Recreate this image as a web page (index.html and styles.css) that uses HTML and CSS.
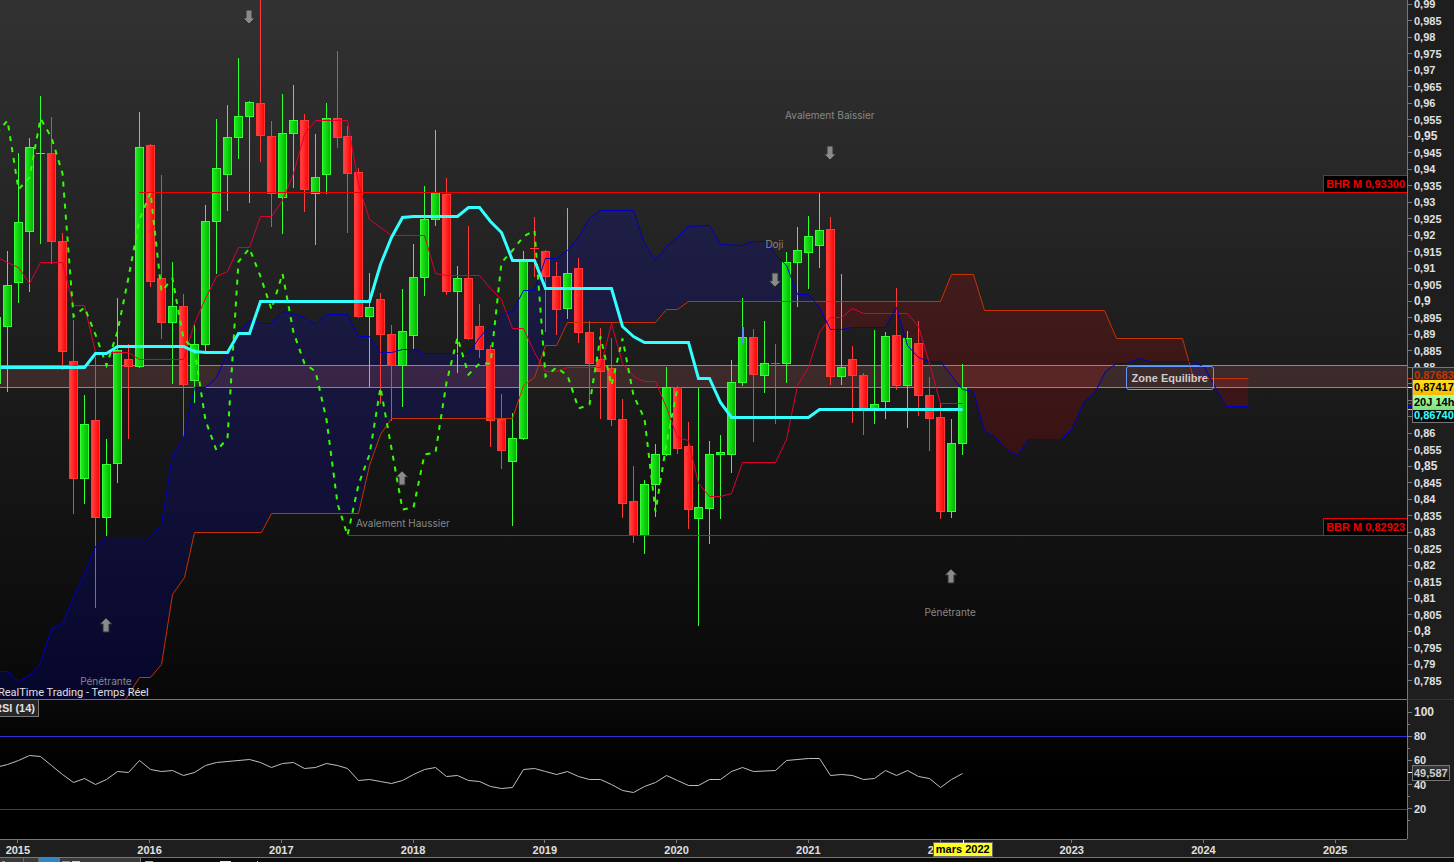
FILE: index.html
```html
<!DOCTYPE html>
<html lang="fr">
  <head>
    <meta charset="UTF-8" />
    <meta name="viewport" content="width=device-width, initial-scale=1.0" />
    <title>Graphique mensuel</title>
    <link rel="stylesheet" href="styles.css" />
  </head>
  <body>
    <main class="chart">
      <section class="price-plot">
        <svg class="plot" viewBox="0 0 1407 699" preserveAspectRatio="none">
          <defs>
            <linearGradient id="up-fill">
              <stop offset="0" stop-color="#22ee22" />
              <stop offset="1" stop-color="#00b400" />
            </linearGradient>
            <linearGradient id="down-fill">
              <stop offset="0" stop-color="#ff4848" />
              <stop offset="1" stop-color="#ff0000" />
            </linearGradient>
            <path id="arrow-down" d="M-3 0H3V8H6L0 14L-6 8H-3Z" />
            <path id="arrow-up" d="M-3 14H3V6H6L0 0L-6 6H-3Z" />
          </defs>

          <!-- cloud -->
          <polygon class="cloud-blue" points="0,671 7,671 18,681 29,675 40,663 51,628 62,623 73,597 84,573 95,546 106,537 150,537 161,524 172,455 183,438 194,387 205,387 216,377 227,352 238,333 249,320 260,323 271,323 282,311 304,317 315,324 326,314 347,314 358,336 369,336 380,352 391,352 402,349 413,349 424,353 468,353 479,337 490,325 501,314 512,311 523,290 534,290 545,258 556,258 567,250 578,237 589,218 600,210 633,210 644,243 655,260 666,246 677,237 688,226 709,225 720,244 742,245 753,241 764,241 775,254 786,265 797,294 808,294 814,301 688,301 677,309 666,309 655,322 567,322 556,345 545,345 534,377 523,385 512,418 391,418 380,434 369,465 358,513 271,513 261,532 194,532 184,577 172,594 161,664 150,677 139,677 125,699 0,699" />
          <polygon class="cloud-red" points="814,301 819,307 830,329 841,329 852,327 885,327 896,307 907,345 918,357 929,361 940,361 951,375 962,389 973,391 984,430 995,437 1006,449 1017,455 1028,439 1061,439 1072,428 1083,402 1094,393 1105,371 1116,363 1127,363 1138,358 1149,361 1188,361 1182,338 1116,338 1104,310 984,310 973,274 951,274 940,301" />
          <polygon class="cloud-blue" points="1188,361 1193,361 1204,367 1210,378 1193,378" />
          <polygon class="cloud-red" points="1210,378 1248,378 1248,406 1226,406 1215,387" />

          <!-- zone equilibre -->
          <rect class="zone" x="0" y="365" width="1407" height="23" />
          <path class="zone-line" d="M0 365.5H1407M0 387.5H1407" />

          <g id="candles"></g>

          <g class="lines" transform="translate(0.5 0.5)">
            <polyline class="tenkan" points="-1,258 7,262 18,267 29,283 40,262 62,262 73,305 84,305 95,352 128,352 139,359 183,359 194,323 205,298 216,276 227,271 238,247 249,247 260,216 271,216 282,200 293,173 304,134 315,120 347,120 358,184 369,219 391,235 424,235 435,273 446,275 479,275 490,288 501,299 512,328 523,328 534,352 545,371 556,371 567,367 600,367 611,323 622,363 633,376 644,381 655,381 666,407 677,437 688,440 698,483 709,496 720,496 731,493 742,462 775,462 786,439 797,385 808,367 819,332 830,317 841,317 852,308 863,313 907,313 918,326 929,363 940,403 962,403" />
            <polyline class="span-b" points="125,699 139,677 150,677 161,664 172,594 184,577 194,532 261,532 271,513 358,513 369,465 380,434 391,418 512,418 523,385 534,377 545,345 556,345 567,322 655,322 666,309 677,309 688,301 940,301 951,274 973,274 984,310 1104,310 1116,338 1182,338 1193,378 1248,378" />
            <polyline class="span-a" points="-1,671 7,671 18,681 29,675 40,663 51,628 62,623 73,597 84,573 95,546 106,537 150,537 161,524 172,455 183,438 194,387 205,387 216,377 227,352 238,333 249,320 260,323 271,323 282,311 304,317 315,324 326,314 347,314 358,336 369,336 380,352 391,352 402,349 413,349 424,353 468,353 479,337 490,325 501,314 512,311 523,290 534,290 545,258 556,258 567,250 578,237 589,218 600,210 633,210 644,243 655,260 666,246 677,237 688,226 709,225 720,244 742,245 753,241 764,241 775,254 786,265 797,294 808,294 819,307 830,329 841,329 852,327 885,327 896,307 907,345 918,357 929,361 940,361 951,375 962,389 973,391 984,430 995,437 1006,449 1017,455 1028,439 1061,439 1072,428 1083,402 1094,393 1105,371 1116,363 1127,363 1138,358 1149,361 1193,361 1204,367 1215,387 1226,406 1248,406" />
            <polyline class="chikou" id="chikou" />
            <polyline class="kijun" points="-1,367 84,367 95,353 106,353 117,346 183,346 194,351 205,352 227,352 238,333 249,333 260,301 369,301 380,264 391,237 402,217 413,216 457,216 468,207 479,207 490,221 501,232 512,260 534,260 545,288 611,288 622,326 633,336 644,342 688,342 698,378 709,378 720,402 731,417 808,417 819,409 962,409" />
            <path class="level" d="M139 192H1407M347 535H1407" />
          </g>
          <rect class="mark" x="742" y="327" width="2" height="16" />

          <g class="arrows">
            <use href="#arrow-down" x="249" y="10" />
            <use href="#arrow-down" x="830" y="146" />
            <use href="#arrow-down" x="775" y="273" />
            <use href="#arrow-up" x="106" y="618" />
            <use href="#arrow-up" x="402" y="471" />
            <use href="#arrow-up" x="951" y="569" />
          </g>
        </svg>
        <span class="note note-baissier">Avalement Baissier</span>
        <span class="note note-doji">Doji</span>
        <span class="note note-haussier">Avalement Haussier</span>
        <span class="note note-penetrante">Pénétrante</span>
        <span class="note note-penetrante-2022">Pénétrante</span>
        <span class="zone-label">Zone Equilibre</span>
        <span class="level-label level-high">BHR M 0,93300</span>
        <span class="level-label level-low">BBR M 0,82923</span>
        <span class="feed">RealTime Trading - Temps Réel</span>
      </section>

      <aside class="price-axis">
        <ul class="scale" id="price-scale"></ul>
        <svg class="axis-marks" viewBox="0 0 4 699" preserveAspectRatio="none">
          <rect x="0" y="378" width="4" height="1" fill="#d43a00" />
          <rect x="0" y="387" width="4" height="1" fill="#ffffff" />
          <rect x="0" y="403" width="4" height="1" fill="#e00030" />
          <rect x="0" y="406" width="4" height="2" fill="#0000e0" />
          <rect x="0" y="409" width="4" height="1" fill="#33ffff" />
        </svg>
        <div class="quotes">
          <span class="quote quote-span">0,87683</span>
          <span class="quote quote-last">0,87417</span>
          <span class="quote quote-time">20J 14h</span>
          <span class="quote quote-kijun">0,86740</span>
        </div>
      </aside>

      <section class="rsi-plot">
        <svg class="plot" viewBox="0 700 1407 139" preserveAspectRatio="none">
          <path class="rsi-level" d="M0 736.5H1407M0 809.5H1407" />
          <polyline class="rsi-line" transform="translate(0.5 0.5)" points="-1,766 7,764 18,760 29,755 40,756 51,765 62,774 73,782 84,778 95,784 106,779 117,771 128,772 139,760 150,769 161,771 172,770 183,775 194,772 205,765 216,762 249,759 260,762 271,767 282,763 293,762 304,768 315,767 326,763 337,765 347,768 358,780 369,779 380,781 391,783 402,780 413,774 424,769 435,767 446,776 457,775 468,780 479,781 490,786 501,788 512,787 523,769 534,768 545,771 556,774 567,771 578,776 589,779 600,779 611,784 622,790 633,792 644,786 655,782 666,775 677,780 688,785 698,785 709,779 720,779 731,771 742,767 753,771 775,770 786,760 808,758 819,758 830,775 841,774 852,775 863,779 874,778 885,770 896,775 907,770 918,776 929,778 940,787 951,779 962,773" />
        </svg>
        <span class="rsi-title">RSI (14)</span>
      </section>

      <aside class="rsi-axis">
        <ul class="scale">
          <li class="round">100</li>
          <li class="minor"></li>
          <li>80</li>
          <li class="minor"></li>
          <li>60</li>
          <li class="current"></li>
          <li>40</li>
          <li class="minor"></li>
          <li>20</li>
          <li class="minor"></li>
        </ul>
        <span class="rsi-value">49,587</span>
      </aside>

      <footer class="time-axis">
        <ul class="years">
          <li>2015</li>
          <li>2016</li>
          <li>2017</li>
          <li>2018</li>
          <li>2019</li>
          <li>2020</li>
          <li>2021</li>
          <li>2022</li>
          <li>2023</li>
          <li>2024</li>
          <li>2025</li>
        </ul>
        <span class="month">mars 2022</span>
      </footer>
      <div class="axis-corner"></div>
    </main>

    <div class="taskbar">
      <svg width="260" height="4" viewBox="0 0 260 4">
        <rect width="140" height="4" fill="#3a3a3a" />
        <rect x="2" y="3" width="3" height="1" fill="#5fbf4f" />
        <rect x="23" width="1" height="4" fill="#666" />
        <rect x="38" width="1" height="4" fill="#666" />
        <rect x="39" width="21" height="4" fill="#2f86c0" />
        <rect x="62" y="3" width="8" height="1" fill="#5d9fce" />
        <rect x="72" y="3" width="8" height="1" fill="#ccc" />
        <rect x="140" width="1" height="4" fill="#777" />
        <rect x="145" y="3" width="8" height="1" fill="#aaa" />
        <rect x="220" y="3" width="11" height="1" fill="#e8e8e8" />
        <rect x="257" y="3" width="1" height="1" fill="#9fe09f" />
      </svg>
    </div>

    <script src="chart.js"></script>
  </body>
</html>
```
FILE: styles.css
```css
* {
  box-sizing: border-box;
}
body {
  margin: 0;
  height: 100vh;
  display: flex;
  flex-direction: column;
  overflow: hidden;
  background-color: #000;
  color: #e0e0e0;
  font-family: "Liberation Sans", Arial, sans-serif;
  font-size: 11px;
}
ul {
  margin: 0;
  padding: 0;
  list-style: none;
}
.chart {
  flex: 1;
  min-height: 0;
  display: grid;
  grid-template-columns: 1fr 47px;
  grid-template-rows: 1fr 140px 19px;
}
.price-plot,
.rsi-plot {
  position: relative;
  min-width: 0;
  min-height: 0;
  overflow: hidden;
}
.price-plot {
  background: linear-gradient(#323232, #080808);
}
.rsi-plot {
  border-top: 1px solid #777;
  background: linear-gradient(#090909, #000 50%);
}
.plot {
  display: block;
  width: 100%;
  height: 100%;
}

/* price drawing */
.cloud-blue {
  fill: rgba(0, 0, 255, 0.15);
}
.cloud-red {
  fill: rgba(255, 0, 0, 0.15);
}
.zone {
  fill: rgba(255, 130, 130, 0.15);
}
.zone-line {
  stroke: #e06464;
}
.lines {
  fill: none;
}
.tenkan {
  stroke: #e00030;
}
.span-a {
  stroke: #0000c0;
}
.span-b {
  stroke: #c83200;
}
.chikou {
  stroke: #33ff00;
  stroke-width: 2;
  stroke-dasharray: 5 6;
}
.kijun {
  stroke: #33ffff;
  stroke-width: 3;
}
.level {
  stroke: #f00000;
}
.mark {
  fill: #5a8cff;
}
.candle {
  shape-rendering: crispEdges;
}
.candle-up {
  fill: url(#up-fill);
  stroke: #33ff33;
}
.candle-down {
  fill: url(#down-fill);
  stroke: #ff3838;
}
.arrows {
  fill: #8a8a8a;
  stroke: #303030;
}

/* labels on the plot */
.note {
  position: absolute;
  line-height: 12px;
  font-family: Inter, "Liberation Sans", sans-serif;
  font-size: 10px;
  color: #888;
  white-space: nowrap;
}
.note-baissier {
  left: 55.8%;
  top: 15.6%;
}
.note-doji {
  left: 54.4%;
  top: 34.1%;
}
.note-haussier {
  left: 25.3%;
  top: 74%;
}
.note-penetrante {
  left: 5.7%;
  top: 96.6%;
}
.note-penetrante-2022 {
  left: 65.7%;
  top: 86.7%;
}
.zone-label {
  position: absolute;
  left: 80%;
  top: 52.3%;
  padding: 0 5px;
  border: 1px solid #6496ff;
  border-radius: 3px;
  line-height: 22px;
  font-weight: bold;
  color: #ccc;
}
.level-label {
  position: absolute;
  right: 0;
  padding: 0 2px;
  border: 1px solid #f00000;
  border-right: none;
  background-color: #000;
  line-height: 16px;
  font-weight: bold;
  color: #f00000;
}
.level-high {
  top: 25%;
}
.level-low {
  top: 74.1%;
}
.feed {
  position: absolute;
  left: -2px;
  bottom: 0;
  line-height: 12px;
  font-family: Roboto, "Liberation Sans", sans-serif;
}
.rsi-title {
  position: absolute;
  left: 0;
  top: 0;
  width: 39px;
  padding-right: 3px;
  display: flex;
  justify-content: flex-end;
  overflow: hidden;
  border-right: 1px solid #777;
  border-bottom: 1px solid #777;
  background-color: #262626;
  line-height: 16px;
  font-weight: bold;
  white-space: nowrap;
}
.rsi-level {
  stroke: #3030d8;
}
.rsi-line {
  fill: none;
  stroke: #c0c0c0;
}

/* axes */
.price-axis,
.rsi-axis {
  position: relative;
  border-left: 1px solid #777;
  background-color: #1e1e1e;
}
.rsi-axis {
  border-top: 1px solid #333;
}
.scale {
  height: 100%;
  display: flex;
  flex-direction: column;
  justify-content: space-between;
  padding-bottom: 14px;
}
.rsi-axis .scale {
  padding-top: 8px;
}
.scale li {
  display: flex;
  align-items: center;
  gap: 2px;
  height: 8px;
  font-weight: bold;
}
.scale li::before {
  content: "";
  width: 4px;
  height: 1px;
  background-color: #777;
}
.scale .round {
  font-size: 12px;
}
.scale .minor::before {
  width: 2px;
}
.scale .current::before {
  background-color: #fff;
}
.axis-marks {
  position: absolute;
  left: 0;
  top: 0;
  width: 4px;
  height: 100%;
}
.quotes {
  position: absolute;
  left: 4px;
  right: 0;
  top: 52.5%;
  display: flex;
  flex-direction: column;
  border: 1px solid #777;
  border-right: none;
  font-weight: bold;
  white-space: nowrap;
  overflow: hidden;
}
.quote {
  height: 12px;
  padding-left: 1px;
  line-height: 14px;
}
.quote-span {
  background-color: #2c2c2c;
  color: #c83200;
}
.quote-last {
  height: 15px;
  background: linear-gradient(#ffe020, #f8b800);
  color: #000;
}
.quote-time {
  height: 15px;
  background: linear-gradient(#a8ffa0, #80dc80);
  line-height: 15px;
  color: #000;
}
.quote-kijun {
  background-color: #0c0c0c;
  line-height: 11px;
  color: #33ffff;
}
.rsi-value {
  position: absolute;
  left: 4px;
  top: 65px;
  padding: 0 1px;
  border: 1px solid #777;
  background: linear-gradient(#3a3a3a, #0c0c0c);
  line-height: 14px;
  font-weight: bold;
  color: #ccc;
}
.time-axis,
.axis-corner {
  border-bottom: 1px solid #777;
  background-color: #1e1e1e;
}
.time-axis {
  position: relative;
  border-top: 1px solid #777;
}
.years {
  display: flex;
  margin-left: -48px;
  margin-right: 6px;
}
.years li {
  flex: 1;
  display: flex;
  flex-direction: column;
  align-items: center;
  line-height: 14px;
  font-weight: bold;
}
.years li::before {
  content: "";
  width: 1px;
  height: 3px;
  background-color: #777;
}
.month {
  position: absolute;
  left: 66.3%;
  bottom: 0;
  padding: 0 2px;
  border: 1px solid #666;
  background-color: #ffff20;
  line-height: 13px;
  font-weight: bold;
  color: #000;
}
.month::before {
  content: "";
  position: absolute;
  left: 50%;
  bottom: 100%;
  width: 1px;
  height: 3px;
  background-color: #fff;
}
.taskbar {
  height: 4px;
  background-color: #0a0a0a;
}
.taskbar svg {
  display: block;
}
```
FILE: chart.js
```js
const SVG = "http://www.w3.org/2000/svg";
const FIRST_MONTH = -2; // november 2014
const LAG = 26;

// [wick top, body top, body bottom, wick bottom, 1 = up / 0 = down]
const candles = [
  [317, 317, 384, 384, 1],
  [251, 285, 327, 392, 1],
  [153, 222, 283, 303, 1],
  [138, 147, 232, 292, 1],
  [96, 153, 154, 244, 1],
  [117, 153, 242, 264, 0],
  [233, 241, 352, 370, 0],
  [320, 361, 479, 514, 0],
  [395, 424, 479, 504, 1],
  [357, 420, 518, 608, 0],
  [439, 464, 518, 536, 1],
  [298, 350, 464, 483, 1],
  [344, 359, 367, 439, 0],
  [112, 147, 367, 368, 1],
  [144, 145, 282, 287, 0],
  [175, 278, 323, 339, 0],
  [262, 306, 323, 384, 1],
  [294, 306, 385, 437, 0],
  [325, 344, 381, 403, 1],
  [205, 221, 345, 351, 1],
  [119, 168, 222, 274, 1],
  [105, 137, 175, 211, 1],
  [58, 116, 138, 159, 1],
  [101, 102, 117, 203, 1],
  [0, 103, 136, 162, 0],
  [121, 136, 194, 227, 0],
  [94, 133, 198, 234, 1],
  [85, 120, 134, 188, 1],
  [114, 120, 190, 212, 0],
  [134, 177, 194, 245, 1],
  [103, 118, 175, 194, 1],
  [51, 118, 138, 148, 0],
  [126, 136, 174, 233, 0],
  [168, 172, 317, 318, 0],
  [273, 307, 317, 387, 1],
  [293, 299, 335, 404, 0],
  [325, 334, 366, 421, 0],
  [289, 331, 366, 407, 1],
  [244, 277, 336, 349, 1],
  [186, 219, 278, 296, 1],
  [130, 192, 220, 226, 1],
  [178, 194, 292, 295, 0],
  [266, 278, 292, 373, 1],
  [226, 278, 339, 340, 0],
  [304, 326, 350, 358, 0],
  [345, 349, 421, 447, 0],
  [394, 419, 451, 469, 0],
  [413, 438, 462, 526, 1],
  [251, 261, 439, 440, 1],
  [217, 248, 249, 277, 0],
  [250, 251, 277, 332, 0],
  [262, 276, 310, 335, 0],
  [208, 273, 309, 319, 1],
  [258, 268, 333, 343, 0],
  [321, 332, 364, 404, 0],
  [328, 359, 372, 419, 0],
  [338, 368, 420, 426, 0],
  [399, 419, 504, 518, 0],
  [466, 501, 536, 543, 0],
  [480, 484, 536, 554, 1],
  [444, 454, 485, 517, 1],
  [367, 387, 455, 456, 1],
  [386, 387, 449, 454, 0],
  [422, 446, 510, 529, 0],
  [388, 507, 519, 626, 1],
  [441, 454, 509, 544, 1],
  [435, 452, 455, 519, 1],
  [360, 382, 455, 473, 1],
  [298, 337, 383, 386, 1],
  [329, 337, 375, 442, 0],
  [321, 363, 376, 393, 1],
  [344, 363, 364, 424, 0],
  [252, 262, 364, 383, 1],
  [227, 250, 263, 307, 1],
  [216, 236, 253, 289, 1],
  [193, 230, 246, 268, 1],
  [217, 229, 377, 385, 0],
  [274, 367, 377, 385, 1],
  [346, 359, 376, 423, 0],
  [373, 375, 409, 435, 0],
  [330, 404, 409, 424, 1],
  [332, 336, 402, 419, 1],
  [288, 335, 386, 390, 0],
  [331, 338, 386, 428, 1],
  [321, 343, 396, 416, 0],
  [377, 395, 419, 451, 0],
  [403, 417, 512, 519, 0],
  [419, 443, 512, 518, 1],
  [364, 387, 444, 455, 1],
];

// x of a month, counted from january 2015
function monthX(month) {
  return 18 + 11 * month - Math.floor((month + 2) / 32);
}

function addShape(parent, name, attributes) {
  const shape = document.createElementNS(SVG, name);
  for (const key in attributes) {
    shape.setAttribute(key, attributes[key]);
  }
  parent.appendChild(shape);
}

function drawCandles() {
  const group = document.getElementById("candles");
  candles.forEach(([high, top, bottom, low, up], i) => {
    const x = monthX(FIRST_MONTH + i);
    const className = up ? "candle candle-up" : "candle candle-down";
    addShape(group, "path", {
      class: className,
      d: `M${x + 0.5} ${high}V${low}`,
    });
    if (bottom - top > 1) {
      addShape(group, "rect", {
        class: className,
        x: x - 3.5,
        y: top + 0.5,
        width: 8,
        height: bottom - top - 1,
      });
    } else {
      addShape(group, "path", {
        class: className,
        d: `M${x - 4} ${top + 0.5}H${x + 5}`,
      });
    }
  });
}

// closing prices moved back by 26 months
function drawChikou() {
  const points = [];
  candles.forEach(([high, top, bottom, low, up], i) => {
    const month = FIRST_MONTH + i - LAG;
    if (month >= -2) {
      points.push(monthX(month) + "," + (up ? top : bottom - 1));
    }
  });
  document.getElementById("chikou").setAttribute("points", points.join(" "));
}

function fillPriceScale() {
  const scale = document.getElementById("price-scale");
  for (let price = 990; price >= 785; price -= 5) {
    const item = document.createElement("li");
    // the quotes box takes the place of these labels, only the ticks stay
    if (price < 865 || price > 875) {
      item.textContent = String(price / 1000).replace(".", ",");
    }
    if (price % 50 === 0) {
      item.classList.add("round");
    }
    scale.appendChild(item);
  }
}

drawCandles();
drawChikou();
fillPriceScale();
```
